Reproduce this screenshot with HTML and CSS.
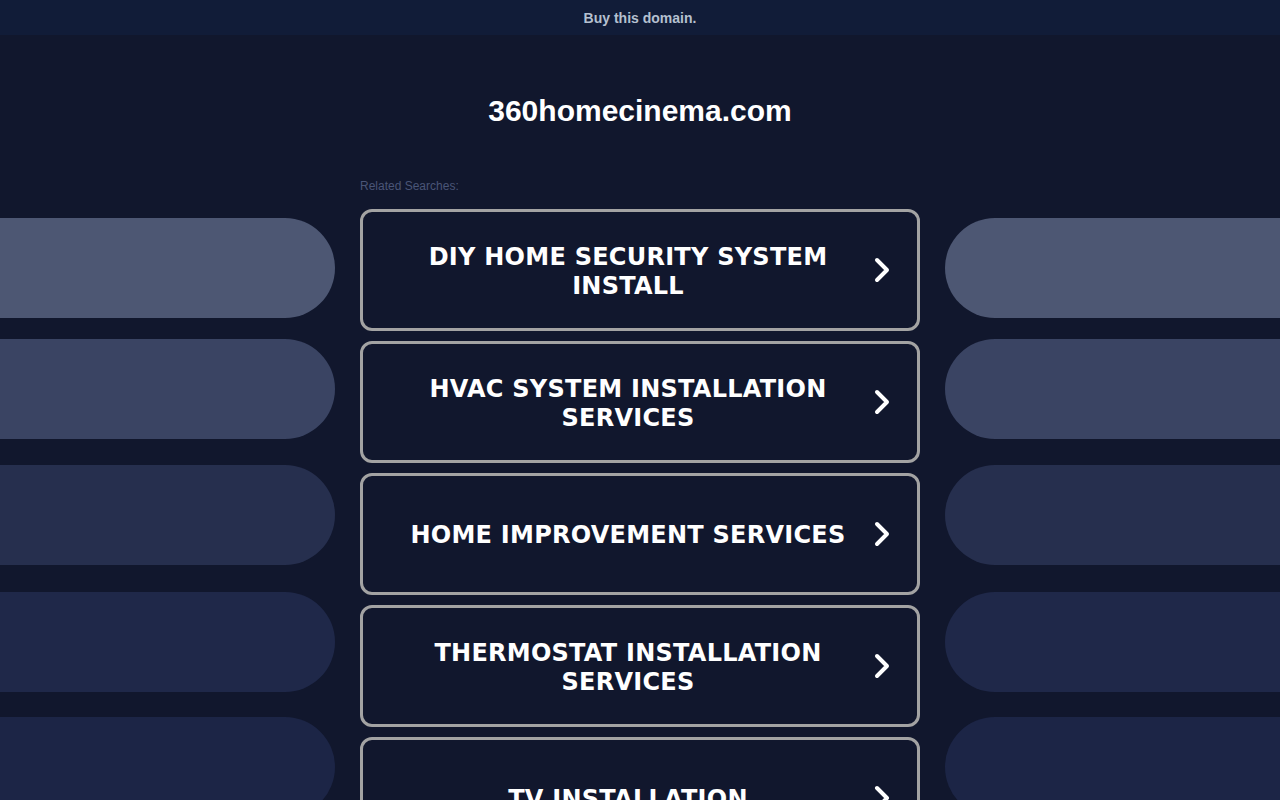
FILE: index.html
```html
<!DOCTYPE html>
<html>
<head>
<meta charset="utf-8">
<link rel="stylesheet" href="styles.css">
</head>
<body>
<div class="topbar">Buy this domain.</div>
<h1 class="domain">360homecinema.com</h1>
<div class="stage">
  <div class="side side-left">
    <div class="pill p1"></div>
    <div class="pill p2"></div>
    <div class="pill p3"></div>
    <div class="pill p4"></div>
    <div class="pill p5"></div>
  </div>
  <div class="center">
    <div class="related">Related Searches:</div>
    <div class="cards">
      <a class="card"><span class="label">DIY HOME SECURITY SYSTEM INSTALL</span><svg class="chev" viewBox="0 0 20 26"><path d="M5 3 L15 13 L5 23" fill="none" stroke="#fff" stroke-width="4" stroke-linecap="round" stroke-linejoin="round"/></svg></a>
      <a class="card"><span class="label">HVAC SYSTEM INSTALLATION SERVICES</span><svg class="chev" viewBox="0 0 20 26"><path d="M5 3 L15 13 L5 23" fill="none" stroke="#fff" stroke-width="4" stroke-linecap="round" stroke-linejoin="round"/></svg></a>
      <a class="card"><span class="label">HOME IMPROVEMENT SERVICES</span><svg class="chev" viewBox="0 0 20 26"><path d="M5 3 L15 13 L5 23" fill="none" stroke="#fff" stroke-width="4" stroke-linecap="round" stroke-linejoin="round"/></svg></a>
      <a class="card"><span class="label">THERMOSTAT INSTALLATION SERVICES</span><svg class="chev" viewBox="0 0 20 26"><path d="M5 3 L15 13 L5 23" fill="none" stroke="#fff" stroke-width="4" stroke-linecap="round" stroke-linejoin="round"/></svg></a>
      <a class="card"><span class="label">TV INSTALLATION</span><svg class="chev" viewBox="0 0 20 26"><path d="M5 3 L15 13 L5 23" fill="none" stroke="#fff" stroke-width="4" stroke-linecap="round" stroke-linejoin="round"/></svg></a>
    </div>
  </div>
  <div class="side side-right">
    <div class="pill p1"></div>
    <div class="pill p2"></div>
    <div class="pill p3"></div>
    <div class="pill p4"></div>
    <div class="pill p5"></div>
  </div>
</div>
</body>
</html>
```
FILE: styles.css
```css
html, body {
  margin: 0;
  padding: 0;
  background: #11172d;
  overflow: hidden;
  height: 800px;
}
body {
  font-family: "Liberation Sans", Arial, sans-serif;
  color: #fff;
}
.topbar {
  height: 35px;
  line-height: 37px;
  background: #111c38;
  text-align: center;
  font-size: 14px;
  font-weight: bold;
  color: #b5c0d0;
}
.domain {
  margin: 0;
  padding-top: 58px;
  height: 94px;
  box-sizing: border-box;
  text-align: center;
  font-size: 30px;
  line-height: 36px;
  font-weight: bold;
  color: #fff;
}
.stage {
  display: flex;
  justify-content: space-between;
  margin-top: 50px;
}
.side {
  width: 335px;
  display: flex;
  flex-direction: column;
  padding-top: 39px;
}
.pill {
  flex: none;
  height: 100px;
  border-radius: 0 50px 50px 0;
  margin-bottom: 21px;
}
.side-right .pill {
  border-radius: 50px 0 0 50px;
}
.pill.p1 { background: #4d5773; }
.pill.p2 { background: #3a4463; margin-bottom: 26px; }
.pill.p3 { background: #262f4e; margin-bottom: 27px; }
.pill.p4 { background: #1f2849; margin-bottom: 25px; }
.pill.p5 { background: #1c2546; }
.center {
  width: 560px;
  display: flex;
  flex-direction: column;
}
.related {
  font-size: 12px;
  color: #4a5577;
  height: 30px;
  line-height: 14px;
}
.cards {
  display: flex;
  flex-direction: column;
  gap: 10px;
}
.card {
  flex: none;
  height: 122px;
  box-sizing: border-box;
  border: 3px solid #a3a3a3;
  border-radius: 12px;
  display: flex;
  align-items: center;
  padding: 3px 25px 0 21px;
  color: #fff;
}
.label {
  flex: 1;
  text-align: center;
  font-family: "DejaVu Sans", Verdana, sans-serif;
  font-weight: bold;
  font-size: 24px;
  line-height: 29px;
  letter-spacing: 0.25px;
}
.chev {
  width: 20px;
  height: 26px;
  flex: none;
  margin-top: -3px;
}
```
